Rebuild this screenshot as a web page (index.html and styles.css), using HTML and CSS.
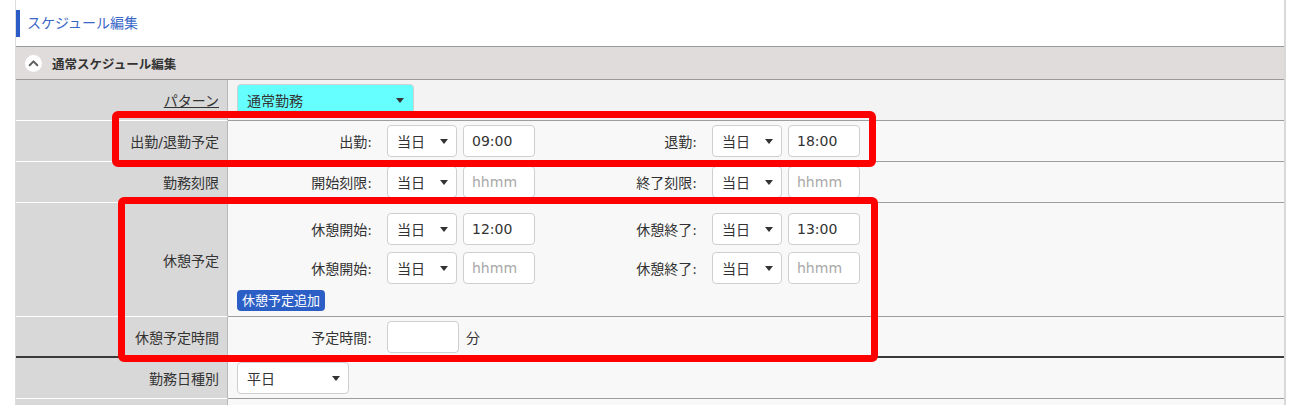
FILE: index.html
```html
<!DOCTYPE html>
<html lang="ja">
<head>
<meta charset="utf-8">
<title>スケジュール編集</title>
<link rel="stylesheet" href="styles.css">
</head>
<body>
<div class="page">
  <h1 class="title">スケジュール編集</h1>
  <div class="section-head">
    <span class="toggle"><svg width="17" height="17" viewBox="0 0 17 17"><circle cx="8.5" cy="8.5" r="8.5" fill="#fff"/><path d="M4.7 10.2 L8.5 6.4 L12.3 10.2" fill="none" stroke="#5f5f5f" stroke-width="2" stroke-linecap="round" stroke-linejoin="round"/></svg></span>
    <span class="section-title">通常スケジュール編集</span>
  </div>
  <div class="form">
    <div class="row row-first">
      <div class="label"><span class="link">パターン</span></div>
      <div class="cell cell-pad">
        <div class="select sel-pattern"><span>通常勤務</span><i class="caret"></i></div>
      </div>
    </div>
    <div class="row">
      <div class="label">出勤/退勤予定</div>
      <div class="cell">
        <div class="line">
          <span class="flabel f1">出勤:</span>
          <div class="select sel-day"><span>当日</span><i class="caret"></i></div>
          <div class="input">09:00</div>
          <span class="flabel f2">退勤:</span>
          <div class="select sel-day"><span>当日</span><i class="caret"></i></div>
          <div class="input">18:00</div>
        </div>
      </div>
    </div>
    <div class="row">
      <div class="label">勤務刻限</div>
      <div class="cell">
        <div class="line">
          <span class="flabel f1">開始刻限:</span>
          <div class="select sel-day"><span>当日</span><i class="caret"></i></div>
          <div class="input placeholder">hhmm</div>
          <span class="flabel f2">終了刻限:</span>
          <div class="select sel-day"><span>当日</span><i class="caret"></i></div>
          <div class="input placeholder">hhmm</div>
        </div>
      </div>
    </div>
    <div class="row">
      <div class="label">休憩予定</div>
      <div class="cell cell-break">
        <div class="line">
          <span class="flabel f1">休憩開始:</span>
          <div class="select sel-day"><span>当日</span><i class="caret"></i></div>
          <div class="input">12:00</div>
          <span class="flabel f2">休憩終了:</span>
          <div class="select sel-day"><span>当日</span><i class="caret"></i></div>
          <div class="input">13:00</div>
        </div>
        <div class="line">
          <span class="flabel f1">休憩開始:</span>
          <div class="select sel-day"><span>当日</span><i class="caret"></i></div>
          <div class="input placeholder">hhmm</div>
          <span class="flabel f2">休憩終了:</span>
          <div class="select sel-day"><span>当日</span><i class="caret"></i></div>
          <div class="input placeholder">hhmm</div>
        </div>
        <span class="btn">休憩予定追加</span>
      </div>
    </div>
    <div class="row row-strong">
      <div class="label">休憩予定時間</div>
      <div class="cell">
        <div class="line">
          <span class="flabel f1">予定時間:</span>
          <div class="input"></div>
          <span class="unit">分</span>
        </div>
      </div>
    </div>
    <div class="row">
      <div class="label">勤務日種別</div>
      <div class="cell cell-pad">
        <div class="select sel-kind"><span>平日</span><i class="caret"></i></div>
      </div>
    </div>
    <div class="row row-last">
      <div class="label"></div>
      <div class="cell"></div>
    </div>
  </div>
</div>
<div class="mark mark-1"></div>
<div class="mark mark-2"></div>
</body>
</html>
```
FILE: styles.css
```css
* { box-sizing: border-box; }
html, body { margin: 0; padding: 0; background: #fff; }
body {
  font-family: "DejaVu Sans", "Noto Sans CJK JP", sans-serif;
  font-size: 14px;
  color: #333;
}
.page {
  margin-left: 15px;
  width: 1271px;
  height: 405px;
  overflow: hidden;
  border-left: 1px solid #dcdcdc;
  border-right: 2px solid #d9d9d9;
  padding-top: 10px;
}
.title {
  margin: 0 0 9px -1px;
  border-left: 5px solid #2b5cc5;
  padding-left: 7px;
  height: 27px;
  line-height: 27px;
  font-size: 14px;
  font-weight: normal;
  color: #3a68c8;
}
.section-head {
  height: 34px;
  border-top: 1px solid #9a9a9a;
  border-bottom: 1px solid #9a9a9a;
  background: #dfdcdb;
  display: flex;
  align-items: center;
  padding-left: 9px;
  gap: 10px;
}
.toggle { display: flex; width: 17px; height: 17px; }
.section-title { font-weight: bold; font-size: 12.5px; color: #333; }
.row {
  display: grid;
  grid-template-columns: 212px 1fr;
}
.label {
  background: #d8d8d8;
  border-right: 1px solid #b8b8b8;
  border-bottom: 1px solid #fff;
  display: flex;
  align-items: center;
  justify-content: flex-end;
  padding-right: 8px;
  min-height: 41px;
}
.cell {
  background: #f8f8f8;
  border-bottom: 1px solid #9d9d9d;
  display: flex;
  align-items: center;
  min-height: 41px;
}
.row-first .cell { background: #f3f3f3; }
.row-strong .label, .row-strong .cell { border-bottom: 2px solid #3a3a3a; }
.row-last .label, .row-last .cell { min-height: 10px; }
.cell-pad { padding-left: 9px; }
.link { text-decoration: underline; }
.line { display: flex; align-items: center; }
.flabel { text-align: right; margin-right: 15px; white-space: nowrap; }
.f1 { width: 144px; }
.f2 { width: 162px; }
.select {
  height: 32px;
  background: #fff;
  border: 1px solid #cfcfcf;
  border-radius: 4px;
  display: flex;
  align-items: center;
  justify-content: space-between;
  padding: 0 8px 0 9px;
}
.sel-pattern { width: 177px; background: #66ffff; padding-right: 9px; }
.sel-day { width: 70px; }
.sel-kind { width: 112px; }
.caret {
  width: 0;
  height: 0;
  border-left: 4px solid transparent;
  border-right: 4px solid transparent;
  border-top: 5px solid #333;
}
.input {
  width: 72px;
  height: 32px;
  margin-left: 6px;
  background: #fff;
  border: 1px solid #cfcfcf;
  border-radius: 4px;
  padding-left: 8px;
  line-height: 30px;
}
.f1 + .input { margin-left: 0; }
.placeholder { color: #a8a8a8; }
.unit { margin-left: 7px; }
.cell-break {
  flex-direction: column;
  align-items: stretch;
  padding: 10px 0 5px;
  gap: 7px;
}
.btn {
  align-self: flex-start;
  margin: -1px 0 0 9px;
  height: 21px;
  line-height: 21px;
  padding: 0 5px;
  font-size: 13px;
  background: #2c5fc6;
  color: #fff;
  border-radius: 4px;
}
.mark {
  position: absolute;
  border: 7px solid #ff0000;
  border-radius: 6px;
}
.mark-1 { left: 112px; top: 111px; width: 764px; height: 56px; }
.mark-2 { left: 118px; top: 197px; width: 760px; height: 165px; }
```
